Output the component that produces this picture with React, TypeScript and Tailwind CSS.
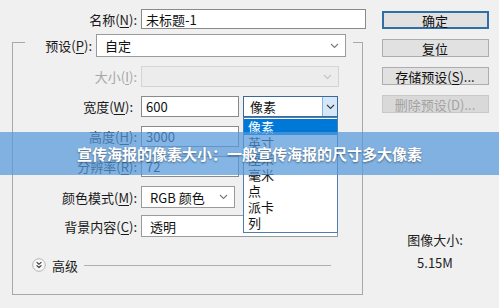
import type { ReactNode } from "react";

const font = "font-['Noto_Sans_CJK_SC','Microsoft_YaHei',sans-serif]";

const Chevron = ({ color = "#7a7a7a" }: { color?: string }) => (
  <svg width="9" height="6" viewBox="0 0 9 6" fill="none">
    <path d="M1 1l3.5 3.5L8 1" stroke={color} strokeWidth="1.1" />
  </svg>
);

const Label = ({
  children,
  w = "w-[124px]",
  muted,
}: {
  children: ReactNode;
  w?: string;
  muted?: boolean;
}) => (
  <div
    className={`${w} shrink-0 pr-[4px] text-right ${muted ? "text-[#a6a6a6]" : "text-[#1a1a1a]"}`}
  >
    {children}
  </div>
);

const U = ({ children }: { children: ReactNode }) => (
  <span className="underline underline-offset-2">{children}</span>
);

const TextBox = ({ w, h, value }: { w: string; h: string; value: string }) => (
  <div
    className={`${w} ${h} flex items-center border border-[#8a8a8a] bg-white pl-[4px] text-[#111]`}
  >
    {value}
  </div>
);

const Combo = ({
  w,
  h,
  value,
  disabled,
}: {
  w: string;
  h: string;
  value?: string;
  disabled?: boolean;
}) => (
  <div
    className={`${w} ${h} flex items-center justify-between border pl-[8px] pr-[6px] ${
      disabled
        ? "border-[#d4d4d4] bg-[#ececec]"
        : "border-[#9a9a9a] bg-white text-[#111]"
    }`}
  >
    <span>{value}</span>
    <Chevron color={disabled ? "#c4c4c4" : "#7a7a7a"} />
  </div>
);

const units = ["像素", "英寸", "厘米", "毫米", "点", "派卡", "列"];

const UnitCombo = () => (
  <div className="relative">
    <div className="flex h-[21px] w-[95px] border border-[#3b6a98] bg-white">
      <div className="flex flex-1 items-center pl-[6px] text-[#111]">像素</div>
      <div className="flex w-[15px] items-center justify-center border-l border-[#7eb4ea] bg-[#d6e8f8]">
        <Chevron color="#3a3a3a" />
      </div>
    </div>
    <div className="absolute left-0 top-full z-10 w-[95px] border border-[#4d7fae] bg-white py-px">
      {units.map((u, i) => (
        <div
          key={u}
          className={`h-[16px] pl-[4px] leading-[16px] ${
            i === 0 ? "bg-[#0078d7] text-white" : "text-[#111]"
          }`}
        >
          {u}
        </div>
      ))}
    </div>
  </div>
);

const Button = ({
  children,
  primary,
  disabled,
}: {
  children: ReactNode;
  primary?: boolean;
  disabled?: boolean;
}) => (
  <div
    className={`flex h-[18px] w-[107px] items-center justify-center ${
      primary
        ? "border-2 border-[#2f6fa6] bg-[#e1e1e1] text-[#111]"
        : disabled
          ? "border border-[#c8c8c8] bg-[#d9d9d9] text-[#a3a3a3]"
          : "border border-[#adadad] bg-[#e1e1e1] text-[#111]"
    }`}
  >
    {children}
  </div>
);

export default function App() {
  return (
    <div
      className={`relative flex h-[308px] w-[499px] overflow-hidden bg-[#f0f0f0] text-[13px] leading-none ${font}`}
    >
      {/* left side: name row + group box */}
      <div className="w-[370px] shrink-0">
        <div className="mt-[9px] flex items-center">
          <Label w="w-[141px]">
            名称(<U>N</U>):
          </Label>
          <TextBox w="w-[225px]" h="h-[20px]" value="未标题-1" />
        </div>

        <div className="ml-[12px] mt-[13px] h-[253px] w-[351px] border border-[#a8a8a8]">
          <div className="-mt-[9px] ml-[12px] flex w-[328px] items-center bg-[#f0f0f0]">
            <Label w="w-[71px]">
              预设(<U>P</U>):
            </Label>
            <Combo w="w-[250px]" h="h-[23px]" value="自定" />
          </div>

          <div className="mt-[9px] flex items-center">
            <Label w="w-[128px]" muted>
              大小(<U>I</U>):
            </Label>
            <Combo w="w-[198px]" h="h-[21px]" disabled />
          </div>

          <div className="mt-[9px] flex items-center gap-[4px]">
            <Label w="w-[124px]">
              宽度(<U>W</U>):
            </Label>
            <TextBox w="w-[98px]" h="h-[21px]" value="600" />
            <UnitCombo />
          </div>

          <div className="mt-[9px] flex items-center">
            <Label w="w-[128px]">
              高度(<U>H</U>):
            </Label>
            <TextBox w="w-[98px]" h="h-[21px]" value="3000" />
          </div>

          <div className="mt-[9px] flex items-center">
            <Label w="w-[128px]">
              分辨率(<U>R</U>):
            </Label>
            <TextBox w="w-[98px]" h="h-[21px]" value="72" />
          </div>

          <div className="mt-[9px] flex items-center">
            <Label w="w-[128px]">
              颜色模式(<U>M</U>):
            </Label>
            <Combo w="w-[94px]" h="h-[22px]" value="RGB 颜色" />
          </div>

          <div className="mt-[7px] flex items-center">
            <Label w="w-[128px]">
              背景内容(<U>C</U>):
            </Label>
            <Combo w="w-[197px]" h="h-[22px]" value="透明" />
          </div>

          <div className="mt-[21px] flex items-center pl-[19px]">
            <svg width="14" height="14" viewBox="0 0 14 14">
              <circle cx="7" cy="7" r="6.3" fill="#f7f7f7" stroke="#b4b4b4" />
              <path
                d="M4.6 4.2L7 6.3l2.4-2.1M4.6 7.4L7 9.5l2.4-2.1"
                fill="none"
                stroke="#333"
                strokeWidth="1.1"
              />
            </svg>
            <span className="ml-[6px] text-[#1a1a1a]">高级</span>
            <div className="ml-[6px] h-px w-[247px] bg-[#b0b0b0]" />
          </div>
        </div>
      </div>

      {/* right side: buttons + image size */}
      <div className="ml-[11px] flex w-[108px] flex-col items-center pt-[11px]">
        <div className="flex flex-col gap-[10px]">
          <Button primary>确定</Button>
          <Button>
            复位
          </Button>
          <Button>
            存储预设(<U>S</U>)...
          </Button>
          <Button disabled>删除预设(D)...</Button>
        </div>
        <div className="mt-[120px] text-[#222]">图像大小:</div>
        <div className="mt-[10px] text-[#222]">5.15M</div>
      </div>

      {/* caption banner over the dialog */}
      <div className="absolute left-0 right-0 top-[132px] z-20 flex h-[43px] items-center justify-center bg-[rgba(85,153,219,0.72)]">
        <span className="text-[15px] font-bold text-white [text-shadow:0_1px_2px_rgba(0,0,0,0.45)]">
          宣传海报的像素大小：一般宣传海报的尺寸多大像素
        </span>
      </div>
    </div>
  );
}
